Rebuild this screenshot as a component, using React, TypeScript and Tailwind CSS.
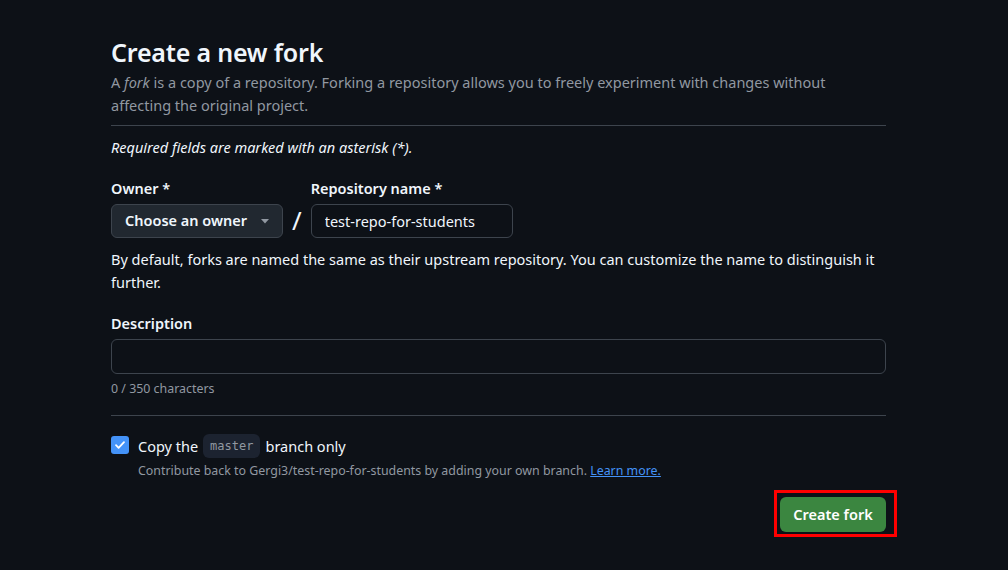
import { useState } from 'react';

const font = { fontFamily: '"Noto Sans", "Liberation Sans", sans-serif' };

export default function App() {
  const [copyMaster, setCopyMaster] = useState(true);
  const [repoName, setRepoName] = useState('test-repo-for-students');
  const [description, setDescription] = useState('');

  return (
    <div className="min-h-[570px] w-full bg-[#0d1117] text-[#f0f6fc]" style={font}>
      <div className="ml-[111px] w-[775px] pt-[36px]">
        <h1 className="text-[25px] leading-[32px] font-semibold tracking-[-0.2px]">Create a new fork</h1>
        <p className="mt-[3px] text-[14.5px] leading-[23px] text-[#9198a1] pr-[40px]">
          A <em>fork</em> is a copy of a repository. Forking a repository allows you to freely experiment with changes without affecting the original project.
        </p>
        <div className="mt-[8px] border-t border-[#3d444d]" />

        <p className="mt-[11px] text-[14.5px] leading-[21px] italic">Required fields are marked with an asterisk (*).</p>

        <div className="mt-[20px] flex items-end">
          <div>
            <label className="block text-[14.5px] leading-[20px] font-semibold mb-[6px]">Owner *</label>
            <button
              type="button"
              className="flex h-[34px] w-[172px] items-center justify-between rounded-[6px] border border-[#3d444d] bg-[#212830] pl-[13px] pr-[13px] text-[14.5px] font-semibold"
            >
              Choose an owner
              <svg width="8" height="5" viewBox="0 0 8 5" className="mt-[1px]">
                <path d="M0 0h8L4 4.5z" fill="#9198a1" />
              </svg>
            </button>
          </div>
          <span className="mx-[9px] mb-[3px] text-[26px] leading-[30px] font-normal">/</span>
          <div>
            <label className="block text-[14.5px] leading-[20px] font-semibold mb-[6px]">Repository name *</label>
            <input
              value={repoName}
              onChange={(e) => setRepoName(e.target.value)}
              className="h-[34px] w-[202px] rounded-[6px] border border-[#3d444d] bg-[#0d1117] px-[13px] text-[14.5px] text-[#f0f6fc] outline-none"
            />
          </div>
        </div>

        <p className="mt-[10px] text-[14.5px] leading-[23px]">
          By default, forks are named the same as their upstream repository. You can customize the name to distinguish it further.
        </p>

        <label className="mt-[19px] block text-[14.5px] leading-[20px] font-semibold">Description</label>
        <input
          value={description}
          onChange={(e) => setDescription(e.target.value)}
          className="mt-[6px] block h-[35px] w-full rounded-[6px] border border-[#3d444d] bg-[#0d1117] px-[12px] text-[14.5px] text-[#f0f6fc] outline-none"
        />
        <p className="mt-[6px] text-[12.4px] leading-[18px] text-[#9198a1]">0 / 350 characters</p>

        <div className="mt-[17px] border-t border-[#3d444d]" />

        <div className="mt-[18px] flex items-start">
          <button
            type="button"
            onClick={() => setCopyMaster(!copyMaster)}
            className={`mt-[2px] flex h-[18px] w-[18px] items-center justify-center rounded-[3px] ${copyMaster ? 'bg-[#4493f8]' : 'border border-[#3d444d]'}`}
          >
            {copyMaster && (
              <svg width="12" height="12" viewBox="0 0 12 12">
                <path d="M2 6.2l2.6 2.6L10 3.2" stroke="#fff" strokeWidth="1.8" fill="none" strokeLinecap="round" strokeLinejoin="round" />
              </svg>
            )}
          </button>
          <div className="ml-[9px]">
            <div className="flex items-center text-[14.5px] leading-[22px]">
              Copy the
              <code
                className="mx-[5px] rounded-[6px] bg-[#1c2330] px-[7px] py-[2px] text-[12px] leading-[20px] text-[#9198a1]"
                style={{ fontFamily: '"DejaVu Sans Mono", "Liberation Mono", monospace' }}
              >
                master
              </code>
              branch only
            </div>
            <p className="mt-[4px] text-[12.4px] leading-[18px] text-[#9198a1]">
              Contribute back to Gergi3/test-repo-for-students by adding your own branch.{' '}
              <a href="#" className="text-[#4493f8] underline">Learn more.</a>
            </p>
          </div>
        </div>

        <div className="mt-[10px] flex justify-end">
          <div className="-mr-[11px] border-[3px] border-[#ff0000] pl-[3px] pr-[8px] pt-[4px] pb-[2px]">
            <button
              type="button"
              className="h-[35px] w-[106px] rounded-[6px] bg-[#3b8640] text-[14.5px] font-semibold text-white"
            >
              Create fork
            </button>
          </div>
        </div>
      </div>
    </div>
  );
}
